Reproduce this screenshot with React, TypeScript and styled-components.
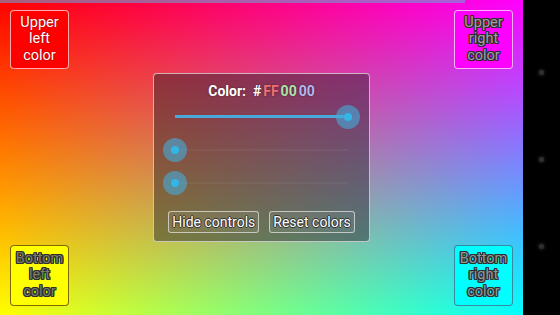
import React from "react";
import styled, { createGlobalStyle, css } from "styled-components";

const GlobalStyle = createGlobalStyle`
  html, body {
    margin: 0;
    padding: 0;
    width: 560px;
    height: 315px;
    overflow: hidden;
    background: #000;
    font-family: Roboto, "Noto Sans", "Liberation Sans", sans-serif;
  }
`;

const Screen = styled.div`
  display: flex;
  width: 560px;
  height: 315px;
`;

const Canvas = styled.main`
  position: relative;
  flex: 1;
  display: grid;
  grid-template-rows: 59px 1fr 61px;
  padding: 10px 10px 9px;
  background: linear-gradient(to right, #ff0000, #ff00ff);
  overflow: hidden;
  &::before {
    content: "";
    position: absolute;
    inset: 0;
    background: linear-gradient(to right, #ffff00, #00ffff);
    -webkit-mask-image: linear-gradient(to bottom, transparent, #000);
    mask-image: linear-gradient(to bottom, transparent, #000);
  }
`;

const Progress = styled.div`
  position: absolute;
  top: 0;
  left: 0;
  width: 465px;
  height: 3px;
  background: rgba(110, 160, 210, 0.6);
  z-index: 2;
`;

const CornerRow = styled.div`
  position: relative;
  z-index: 1;
  display: flex;
  justify-content: space-between;
  align-items: stretch;
`;

type Tone = "ul" | "ur" | "bl" | "br";

const outline = css`
  text-shadow: -1px 0 #2e2e2e, 1px 0 #2e2e2e, 0 -1px #2e2e2e, 0 1px #2e2e2e,
    -1px -1px #2e2e2e, 1px 1px #2e2e2e, -1px 1px #2e2e2e, 1px -1px #2e2e2e;
`;

const tones: Record<Tone, ReturnType<typeof css>> = {
  ul: css`
    background: #ff0000;
    border-color: rgba(255, 225, 225, 0.75);
    color: #fff;
    text-shadow: 0 0 2px rgba(60, 0, 0, 0.7);
  `,
  ur: css`
    background: #ff00ff;
    border-color: rgba(255, 220, 255, 0.8);
    color: #a89aa8;
    ${outline}
  `,
  bl: css`
    background: #ffff00;
    border-color: rgba(110, 90, 0, 0.9);
    color: #7c7c70;
    ${outline}
  `,
  br: css`
    background: #00ffff;
    border-color: rgba(60, 120, 140, 0.85);
    color: #8c9a9a;
    ${outline}
  `,
};

const CornerButton = styled.button<{ $tone: Tone }>`
  width: 59px;
  display: flex;
  align-items: center;
  justify-content: center;
  padding: 0;
  border: 1px solid;
  border-radius: 4px;
  font-family: Roboto, "Noto Sans", sans-serif;
  font-size: 14.5px;
  line-height: 16.5px;
  text-align: center;
  ${({ $tone }) => tones[$tone]}
`;

const Middle = styled.div`
  position: relative;
  z-index: 1;
  display: flex;
  align-items: center;
  justify-content: center;
`;

const Panel = styled.section`
  width: 217px;
  height: 169px;
  box-sizing: border-box;
  display: flex;
  flex-direction: column;
  padding-top: 7px;
  border: 1px solid rgba(235, 235, 235, 0.7);
  border-radius: 4px;
  background: rgba(35, 30, 40, 0.45);
`;

const Title = styled.div`
  height: 20px;
  line-height: 20px;
  text-align: center;
  color: #fff;
  font-weight: bold;
  font-size: 14px;
  text-shadow: 0 0 2px rgba(0, 0, 0, 0.5);
`;

const Hex = styled.span<{ $color: string }>`
  color: ${({ $color }) => $color};
  margin-left: 2px;
`;

const SliderRow = styled.div`
  position: relative;
  height: 32px;
  margin: 0 21px 1px;
`;

const Track = styled.div`
  position: absolute;
  left: 0;
  right: 0;
  top: 15px;
  height: 2px;
  background: rgba(210, 210, 210, 0.06);
`;

const Fill = styled.div`
  position: absolute;
  left: 0;
  top: 14.5px;
  height: 3px;
  background: #4aa9db;
`;

const Thumb = styled.div`
  position: absolute;
  top: 4px;
  width: 24px;
  height: 24px;
  margin-left: -12px;
  border-radius: 50%;
  background: rgba(70, 170, 215, 0.62);
  display: flex;
  align-items: center;
  justify-content: center;
  &::after {
    content: "";
    width: 8px;
    height: 8px;
    border-radius: 50%;
    background: #33b5e5;
  }
`;

const Buttons = styled.div`
  display: flex;
  justify-content: center;
  gap: 10px;
  margin-top: 11px;
`;

const PanelButton = styled.button`
  height: 22px;
  padding: 0 3px;
  border: 1px solid rgba(225, 225, 225, 0.75);
  border-radius: 3px;
  background: rgba(255, 255, 255, 0.06);
  color: #fff;
  font-family: Roboto, "Noto Sans", sans-serif;
  font-size: 14px;
  line-height: 20px;
  text-shadow: -1px 0 #333, 1px 0 #333, 0 -1px #333, 0 1px #333;
`;

const NavBar = styled.nav`
  width: 37px;
  background: #000;
  display: flex;
  flex-direction: column;
  align-items: center;
  justify-content: space-between;
  padding: 70px 0 66px;
  box-sizing: border-box;
`;

const NavDot = styled.span`
  width: 5px;
  height: 5px;
  border-radius: 50%;
  background: #2e2e2e;
  box-shadow: 0 0 3px 1px rgba(60, 60, 60, 0.5);
`;

const Slider = ({ value }: { value: number }) => (
  <SliderRow>
    <Track />
    <Fill style={{ width: `${value * 100}%` }} />
    <Thumb style={{ left: `${value * 100}%` }} />
  </SliderRow>
);

const App = () => {
  return (
    <>
      <GlobalStyle />
      <Screen>
        <Canvas>
          <Progress />
          <CornerRow>
            <CornerButton $tone="ul">
              Upper
              <br />
              left
              <br />
              color
            </CornerButton>
            <CornerButton $tone="ur">
              Upper
              <br />
              right
              <br />
              color
            </CornerButton>
          </CornerRow>
          <Middle>
            <Panel>
              <Title>
                Color:&nbsp; #<Hex $color="#ea7272">FF</Hex>
                <Hex $color="#aee3a8">00</Hex>
                <Hex $color="#b3b8f0">00</Hex>
              </Title>
              <Slider value={1} />
              <Slider value={0} />
              <Slider value={0} />
              <Buttons>
                <PanelButton>Hide controls</PanelButton>
                <PanelButton>Reset colors</PanelButton>
              </Buttons>
            </Panel>
          </Middle>
          <CornerRow>
            <CornerButton $tone="bl">
              Bottom
              <br />
              left
              <br />
              color
            </CornerButton>
            <CornerButton $tone="br">
              Bottom
              <br />
              right
              <br />
              color
            </CornerButton>
          </CornerRow>
        </Canvas>
        <NavBar>
          <NavDot />
          <NavDot />
          <NavDot />
        </NavBar>
      </Screen>
    </>
  );
};

export default App;
